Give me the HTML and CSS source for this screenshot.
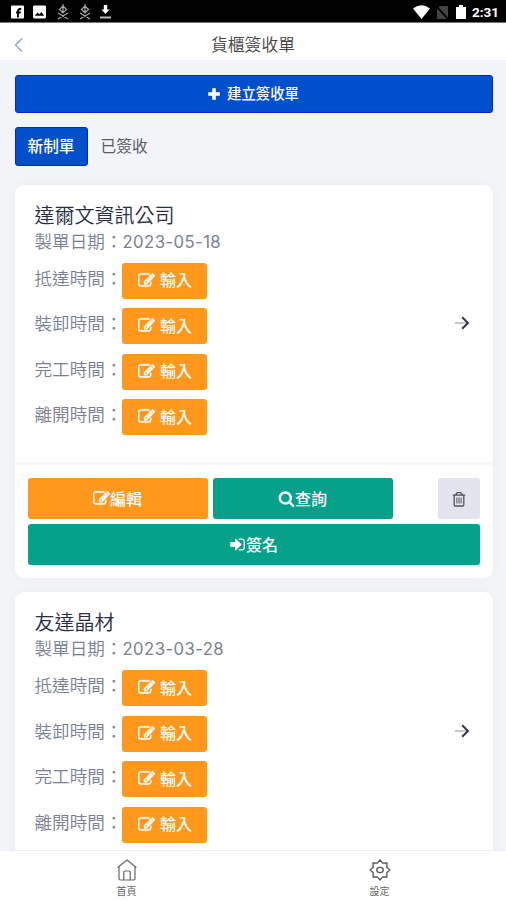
FILE: index.html
```html
<!DOCTYPE html>
<html lang="zh-Hant">
<head>
<meta charset="utf-8">
<meta name="viewport" content="width=device-width, initial-scale=1">
<title>貨櫃簽收單</title>
<link rel="stylesheet" href="styles.css">
</head>
<body>
<svg class="defs" aria-hidden="true">
  <symbol id="edit" viewBox="0 0 1792 1792"><path stroke="currentColor" stroke-width="50" d="M888 1184l116-116-152-152-116 116v56h96v96h56zm440-720q-16-16-33 1l-350 350q-17 17-1 33t33-1l350-350q17-17 1-33zm80 594v190q0 119-84.500 203.500t-203.500 84.500h-832q-119 0-203.500-84.500t-84.500-203.500v-832q0-119 84.500-203.500t203.500-84.500h832q63 0 117 25 15 7 18 23 3 17-9 29l-49 49q-14 14-32 8-23-6-45-6h-832q-66 0-113 47t-47 113v832q0 66 47 113t113 47h832q66 0 113-47t47-113v-126q0-13 9-22l64-64q15-15 35-7t20 29zm-96-738l288 288-672 672h-288v-288zm444 132l-92 92-288-288 92-92q28-28 68-28t68 28l152 152q28 28 28 68t-28 68z"/></symbol>
  <symbol id="search" viewBox="0 0 1792 1792"><path d="M1216 832q0-185-131.500-316.500t-316.500-131.500-316.500 131.500-131.500 316.500 131.500 316.500 316.500 131.500 316.500-131.500 131.500-316.500zm512 832q0 52-38 90t-90 38q-54 0-90-38l-343-342q-179 124-399 124-143 0-273.500-55.500t-225-150-150-225-55.500-273.500 55.500-273.500 150-225 225-150 273.500-55.500 273.500 55.500 225 150 150 225 55.500 273.500q0 220-124 399l343 343q37 37 37 90z"/></symbol>
  <symbol id="sign" viewBox="0 0 1792 1792"><path d="M1312 896q0 26-19 45l-544 544q-19 19-45 19t-45-19-19-45v-288h-448q-26 0-45-19t-19-45v-384q0-26 19-45t45-19h448v-288q0-26 19-45t45-19 45 19l544 544q19 19 19 45zm352-352v704q0 119-84.500 203.500t-203.500 84.500h-320q-32 0-32-32v-64q0-32 32-32h320q66 0 113-47t47-113v-704q0-66-47-113t-113-47h-320q-32 0-32-32v-64q0-32 32-32h320q119 0 203.500 84.500t84.500 203.500z"/></symbol>
  <symbol id="arrow" viewBox="0 0 16 16"><path d="M1 8h12" stroke="#a5a8b4" stroke-width="1.300"/><path d="M8.200 2.200L14 8l-5.800 5.800" fill="none" stroke="#33374a" stroke-width="2"/></symbol>
  <symbol id="trash" viewBox="0 0 14 16"><g fill="none" stroke="#50525e" stroke-width="1.300"><path d="M.8 4.200h12.400M3.500 4l1.700-2.300h3.600L10.500 4M2.200 4.500V14q0 1 1 1h7.600q1 0 1-1V4.500"/><path d="M4.900 6.500v6M7 6.500v6M9.100 6.500v6" stroke-width="1"/></g></symbol>
  <symbol id="person" viewBox="0 0 12 16"><g fill="none" stroke="#aaa" stroke-width="1.200"><path d="M6 0v9M6 2L2.500 5.500 6 9l3.500-3.500zM1 9l10 6M11 9L1 15"/></g></symbol>
</svg>
<div class="screen">
  <div class="status">
    <div class="status-left">
      <svg width="13" height="14" viewBox="0 0 14 14"><rect width="14" height="14" rx="1" fill="#fff"/><path d="M7.500 13V6.500C7.500 4.500 8.500 3.500 11 3.500M5.500 7.500h5" fill="none" stroke="#000" stroke-width="2"/></svg>
      <svg width="13" height="14" viewBox="0 0 14 14"><rect width="14" height="14" rx="1.500" fill="#fff"/><path d="M2 11l3-3.500 2 1.800L9.300 7 12 11z"/></svg>
      <svg width="12" height="16"><use href="#person"/></svg>
      <svg width="12" height="16"><use href="#person"/></svg>
      <svg width="11" height="16" viewBox="0 0 11 16"><path d="M3.800 1h3.400v4.500h2.300l-4 4.500-4-4.500h2.300z" fill="#fff"/><path d="M0 12.500h11v2H0z" fill="#bbb"/></svg>
    </div>
    <div class="status-right">
      <svg width="17" height="14" viewBox="0 0 17 14"><path d="M0 3.500Q8.500-3 17 3.500L8.500 14z" fill="#fff"/></svg>
      <svg class="sim" width="12" height="13" viewBox="0 0 12 13"><path d="M4 0h8v13H1V3z" fill="#444"/><path d="M0 0l12 13" stroke="#000" stroke-width="1.800"/></svg>
      <svg class="battery" width="10" height="14" viewBox="0 0 10 14"><path d="M0 2h3V0h4v2h3v12H0z" fill="#fff"/></svg>
      <span>2:31</span>
    </div>
  </div>
  <header class="header">
    <svg class="back" width="9" height="14" viewBox="0 0 9 14"><path d="M8 .5L1.500 7 8 13.500" fill="none" stroke="#96a0bd" stroke-width="1.400"/></svg>
    <h1>貨櫃簽收單</h1>
  </header>
  <main class="content">
    <button class="btn create"><svg width="12" height="12" viewBox="0 0 12 12"><path d="M6 .2v11.600M.2 6h11.600" stroke="#fff" stroke-width="3.600"/></svg>建立簽收單</button>
    <nav class="tabs"><span class="tab active">新制單</span><span class="tab">已簽收</span></nav>
    <article class="card">
      <div class="card-main">
        <div class="info">
          <h2>達爾文資訊公司</h2>
          <p class="date">製單日期：<span>2023-05-18</span></p>
          <div class="row"><span>抵達時間：</span><button class="btn input"><svg><use href="#edit"/></svg>輸入</button></div>
          <div class="row"><span>裝卸時間：</span><button class="btn input"><svg><use href="#edit"/></svg>輸入</button></div>
          <div class="row"><span>完工時間：</span><button class="btn input"><svg><use href="#edit"/></svg>輸入</button></div>
          <div class="row"><span>離開時間：</span><button class="btn input"><svg><use href="#edit"/></svg>輸入</button></div>
        </div>
        <svg class="arrow"><use href="#arrow"/></svg>
      </div>
      <div class="actions">
        <button class="btn orange"><svg><use href="#edit"/></svg>編輯</button>
        <button class="btn green"><svg><use href="#search"/></svg>查詢</button>
        <button class="btn delete" aria-label="刪除"><svg><use href="#trash"/></svg></button>
        <button class="btn green wide"><svg><use href="#sign"/></svg>簽名</button>
      </div>
    </article>
    <article class="card">
      <div class="card-main">
        <div class="info">
          <h2>友達晶材</h2>
          <p class="date">製單日期：<span>2023-03-28</span></p>
          <div class="row"><span>抵達時間：</span><button class="btn input"><svg><use href="#edit"/></svg>輸入</button></div>
          <div class="row"><span>裝卸時間：</span><button class="btn input"><svg><use href="#edit"/></svg>輸入</button></div>
          <div class="row"><span>完工時間：</span><button class="btn input"><svg><use href="#edit"/></svg>輸入</button></div>
          <div class="row"><span>離開時間：</span><button class="btn input"><svg><use href="#edit"/></svg>輸入</button></div>
        </div>
        <svg class="arrow"><use href="#arrow"/></svg>
      </div>
    </article>
  </main>
  <nav class="bottom">
    <a><svg width="20" height="22" viewBox="0 0 20 22"><g fill="none" stroke="#666" stroke-width="1.200"><path d="M.6 8.500L10 1l9.400 7.500M2 7.500V19.500Q2 21 3.500 21h13q1.500 0 1.500-1.500V7.500"/><path d="M6.800 21v-8q0-1 1-1h4.400q1 0 1 1v8"/></g></svg>首頁</a>
    <a><svg width="22" height="22" viewBox="0 0 22 22"><g fill="none" stroke="#555" stroke-width="1.300" stroke-linejoin="round"><path d="M11 1l2.600 3.200 4.400-.2-.2 4.400L21 11l-3.200 2.600.2 4.400-4.400-.2L11 21l-2.600-3.200L4 18l.2-4.400L1 11l3.200-2.600L4 4l4.400.2z"/><ellipse cx="11" cy="11" rx="3.200" ry="2.600"/></g></svg>設定</a>
  </nav>
</div>
</body>
</html>
```

FILE: styles.css
```css
* { box-sizing: border-box; }
body {
  margin: 0;
  font-family: Inter, "Noto Sans CJK TC", sans-serif;
  color: #7a7f92;
}
h1, h2, p { margin: 0; font-weight: 350; }
svg { display: block; flex: none; }
.defs { display: none; }
.screen {
  height: 900px;
  display: flex;
  flex-direction: column;
  overflow: hidden;
  background: #f3f4f8;
}
.status {
  flex: none;
  height: 23px;
  background: #000;
  border-bottom: 1px solid #777;
  display: flex;
  align-items: center;
  justify-content: space-between;
  padding: 2px 7px 0 11px;
}
.status-left { display: flex; align-items: center; gap: 9px; }
.status-left svg:nth-child(3) { margin-left: 2px; }
.status-left svg:nth-child(4) { margin-left: 1px; }
.status-right {
  display: flex;
  align-items: center;
  color: #fff;
  font: 700 13.500px/16px Roboto, sans-serif;
}
.sim { margin-left: 6px; }
.battery { margin: 0 6px 0 8px; }
.header {
  flex: none;
  height: 37px;
  background: #fff;
  display: grid;
  grid-template-columns: 1fr auto 1fr;
  align-items: center;
  padding: 6px 14px 0;
}
.header h1 {
  font-size: 16.800px;
  line-height: 24px;
  color: #444;
  grid-column: 2;
}
.content {
  flex: 1;
  min-height: 0;
  overflow: hidden;
  padding: 15px 13.500px 0 14.500px;
}
.btn {
  border: 0;
  border-radius: 3px;
  padding: 0;
  color: #fff;
  font: 500 16px/20px Inter, "Noto Sans CJK TC", sans-serif;
  display: flex;
  align-items: center;
  justify-content: center;
}
.btn svg { fill: currentColor; width: 17px; height: 17px; }
.create {
  width: 100%;
  height: 38px;
  background: #0050ce;
  border: 1px solid #0926bd;
  font-size: 14.400px;
  gap: 7px;
}
.create svg { width: 12px; height: 12px; }
.tabs { display: flex; margin: 14px 0 18.500px; height: 39px; }
.tab {
  padding: 0 13px;
  font-size: 15.700px;
  line-height: 40px;
  color: #555b66;
}
.active {
  padding: 0 12px;
  background: #0050ce;
  border: 1px solid #0926bd;
  border-radius: 3px;
  line-height: 38px;
  color: #fff;
  font-weight: 500;
}
.card {
  background: #fff;
  border-radius: 9px;
  margin-bottom: 14px;
  box-shadow: 0 0 12px rgba(60, 70, 110, .04);
}
.card-main {
  display: flex;
  justify-content: space-between;
  align-items: center;
  height: 280px;
  padding: 0 23px 0 20px;
  border-bottom: 3px solid #f8f8fa;
}
.info { align-self: flex-start; padding-top: 19px; }
.info h2 { font-size: 20px; line-height: 25px; color: #292d49; }
.date { font-size: 17.600px; line-height: 26px; height: 34px; }
.date span { font-size: 16.700px; font-weight: 400; letter-spacing: .43px; }
.row {
  display: flex;
  height: 45.500px;
  font-size: 17.600px;
  line-height: 32px;
  font-weight: 350;
}
.input { width: 85px; height: 36px; background: #ff981c; gap: 5px; padding-bottom: 1px; }
.arrow { width: 16px; height: 16px; }
.actions {
  display: grid;
  grid-template-columns: 180px 180px 42px;
  justify-content: space-between;
  gap: 5px 0;
  padding: 13.500px 13px 13px;
}
.actions .btn { height: 41px; }
.actions .green:not(.wide) { margin-left: -20px; margin-right: 20px; }
.actions .wide { grid-column: 1 / -1; }
.orange { background: #ff981c; }
.green { background: #06a18a; }
.delete { background: #e3e4ee; }
.delete svg { width: 14px; height: 16px; }
.bottom {
  flex: none;
  height: 50px;
  background: #fff;
  border-top: 1px solid #eef0f8;
  display: grid;
  grid-template-columns: 1fr 1fr;
}
.bottom a {
  display: flex;
  flex-direction: column;
  align-items: center;
  padding-top: 8px;
  gap: 2px;
  font-size: 10px;
  line-height: 16px;
  color: #666;
}
```
